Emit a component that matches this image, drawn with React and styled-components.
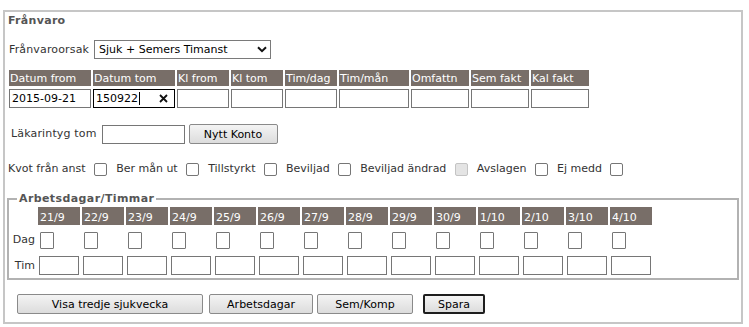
import React from 'react';
import styled, { createGlobalStyle } from 'styled-components';

const Global = createGlobalStyle`
  html, body { margin: 0; padding: 0; background: #fff; }
  body {
    font-family: "DejaVu Sans", Verdana, sans-serif;
    font-size: 11px;
    color: #333;
  }
  * { box-sizing: border-box; }
`;

const Panel = styled.div`
  margin: 10px 0 0 3px;
  width: 740px;
  border: 2px solid #c6c6c6;
  padding: 2px 2px 8px 2px;
  display: flex;
  flex-direction: column;
`;

const Title = styled.div`
  font-weight: bold;
  line-height: 14px;
  height: 14px;
  color: #555;
  padding-left: 1px;
  letter-spacing: 0.3px;
`;

const Row = styled.div`
  display: flex;
  align-items: center;
  margin-top: ${(p) => p.$mt || 0}px;
  padding-left: ${(p) => p.$pl || 0}px;
  gap: ${(p) => p.$gap || 0}px;
  height: ${(p) => p.$h}px;
`;

const Label = styled.span`
  line-height: 14px;
  white-space: nowrap;
  color: #333;
  letter-spacing: 0.15px;
`;

const SelectWrap = styled.div`
  position: relative;
  width: 177px;
  height: 19px;
`;

const Select = styled.select`
  appearance: none;
  -webkit-appearance: none;
  width: 100%;
  height: 100%;
  border: 1px solid #7a7a7a;
  border-radius: 0;
  padding: 0 0 0 4px;
  font: inherit;
  color: #000;
  background: #fff;
  outline: none;
`;

const Chevron = styled.svg`
  position: absolute;
  right: 4px;
  top: 6px;
  pointer-events: none;
`;

const FieldGrid = styled.div`
  display: grid;
  grid-template-columns: 82px 82px 52px 52px 52px 70px 58px 58px 58px;
  grid-template-rows: 16px 19px;
  column-gap: 2px;
  row-gap: 3px;
  margin: 11px 0 0 2px;
`;

const HeadCell = styled.div`
  background: #786e68;
  color: #fff;
  padding: 2px 0 0 1px;
  line-height: 14px;
  white-space: nowrap;
  overflow: hidden;
`;

const TextInput = styled.input`
  width: ${(p) => (p.$w ? `${p.$w}px` : '100%')};
  height: 19px;
  border: 1px solid #767676;
  border-radius: 0;
  padding: 0 2px;
  margin: 0 0 0 ${(p) => p.$ml || 0}px;
  font: inherit;
  color: #000;
  background: #fff;
  outline: none;
`;

const FocusField = styled.div`
  display: flex;
  align-items: center;
  height: 19px;
  border: 1px solid #000;
  padding: 0 6px 0 2px;
  color: #000;
  background: #fff;
`;

const Caret = styled.span`
  display: inline-block;
  width: 1px;
  height: 13px;
  background: #000;
  margin-left: 1px;
`;

const ClearIcon = styled.svg`
  margin-left: auto;
`;

const Button = styled.button`
  width: ${(p) => p.$w}px;
  height: 20px;
  margin: 0 0 0 ${(p) => p.$ml || 0}px;
  padding: 0;
  border: ${(p) => (p.$primary ? '2px solid #1e1e1e' : '1px solid #8a8a8a')};
  border-radius: 2px;
  background: linear-gradient(#f4f4f4, #dcdcdc);
  font: inherit;
  color: #000;
  white-space: nowrap;
`;

const CheckRow = styled.div`
  display: flex;
  align-items: center;
  height: 14px;
  margin-top: 18px;
  padding-left: 1px;
  gap: 9px;
`;

const CheckItem = styled.label`
  display: inline-flex;
  align-items: center;
  gap: 8.5px;
  line-height: 14px;
  white-space: nowrap;
  color: #333;
`;

const Check = styled.input`
  appearance: none;
  -webkit-appearance: none;
  width: 13px;
  height: 13px;
  margin: 0;
  border: 1px solid ${(p) => (p.disabled ? '#c4c4c4' : '#767676')};
  border-radius: 2px;
  background: ${(p) => (p.disabled ? '#e4e4e4' : '#fff')};
`;

const Fieldset = styled.fieldset`
  margin: 16px 0 0 0;
  border: 2px solid #b2b2b2;
  padding: 2px 3px 3px 1px;
  min-width: 0;
`;

const Legend = styled.legend`
  margin-left: 7px;
  padding: 0 2px;
  font-weight: bold;
  line-height: 13px;
  color: #555;
  letter-spacing: 0.4px;
`;

const DayGrid = styled.div`
  display: grid;
  grid-template-columns: 26px repeat(14, 42px);
  grid-template-rows: 18px 25px 25px;
  column-gap: 2px;
  align-items: end;
`;

const DayHead = styled.div`
  height: 18px;
  background: #786e68;
  color: #fff;
  padding: 4px 0 0 2px;
  line-height: 14px;
  white-space: nowrap;
`;

const RowLabel = styled.div`
  text-align: right;
  padding-right: 1px;
  line-height: ${(p) => p.$lh}px;
  margin-bottom: ${(p) => p.$mb || 0}px;
  color: #333;
`;

const DayCheck = styled.input`
  appearance: none;
  -webkit-appearance: none;
  width: 14px;
  height: 17px;
  margin: 0 0 1px 2px;
  border: 1px solid #767676;
  border-radius: 1px;
  background: #fff;
`;

const DayInput = styled.input`
  width: 40px;
  height: 19px;
  margin: 0 0 0 1px;
  border: 1px solid #767676;
  border-radius: 0;
  padding: 0 2px;
  font: inherit;
  background: #fff;
  outline: none;
`;

const ButtonRow = styled.div`
  display: flex;
  margin-top: 14px;
  padding-left: 10px;
`;

const headers = [
  'Datum from', 'Datum tom', 'Kl from', 'Kl tom', 'Tim/dag',
  'Tim/mån', 'Omfattn', 'Sem fakt', 'Kal fakt',
];

const checks = [
  { label: 'Kvot från anst' },
  { label: 'Ber mån ut' },
  { label: 'Tillstyrkt' },
  { label: 'Beviljad' },
  { label: 'Beviljad ändrad', disabled: true },
  { label: 'Avslagen' },
  { label: 'Ej medd' },
];

const days = [
  '21/9', '22/9', '23/9', '24/9', '25/9', '26/9', '27/9',
  '28/9', '29/9', '30/9', '1/10', '2/10', '3/10', '4/10',
];

export default function App() {
  return (
    <>
      <Global />
      <Panel>
        <Title>Frånvaro</Title>

        <Row $mt={12} $pl={2} $gap={5} $h={19}>
          <Label>Frånvaroorsak</Label>
          <SelectWrap>
            <Select defaultValue="sjuk">
              <option value="sjuk">Sjuk + Semers Timanst</option>
            </Select>
            <Chevron width="10" height="7" viewBox="0 0 10 7">
              <path d="M1 1.2 L5 5.2 L9 1.2" fill="none" stroke="#111" strokeWidth="2" />
            </Chevron>
          </SelectWrap>
        </Row>

        <FieldGrid>
          {headers.map((h) => (
            <HeadCell key={h}>{h}</HeadCell>
          ))}
          <TextInput defaultValue="2015-09-21" />
          <FocusField>
            <span>150922</span>
            <Caret />
            <ClearIcon width="9" height="9" viewBox="0 0 9 9">
              <path d="M1 1 L8 8 M8 1 L1 8" stroke="#111" strokeWidth="1.8" />
            </ClearIcon>
          </FocusField>
          {headers.slice(2).map((h) => (
            <TextInput key={h} />
          ))}
        </FieldGrid>

        <Row $mt={16} $pl={4} $h={20}>
          <Label>Läkarintyg tom</Label>
          <TextInput $w={83} $ml={5} />
          <Button $w={89} $ml={4}>Nytt Konto</Button>
        </Row>

        <CheckRow>
          {checks.map((c) => (
            <CheckItem key={c.label}>
              {c.label}
              <Check type="checkbox" disabled={c.disabled} />
            </CheckItem>
          ))}
        </CheckRow>

        <Fieldset>
          <Legend>Arbetsdagar/Timmar</Legend>
          <DayGrid>
            <div />
            {days.map((d) => (
              <DayHead key={d}>{d}</DayHead>
            ))}
            <RowLabel $lh={18} $mb={1}>Dag</RowLabel>
            {days.map((d) => (
              <DayCheck key={d} type="checkbox" />
            ))}
            <RowLabel $lh={19}>Tim</RowLabel>
            {days.map((d) => (
              <DayInput key={d} />
            ))}
          </DayGrid>
        </Fieldset>

        <ButtonRow>
          <Button $w={186}>Visa tredje sjukvecka</Button>
          <Button $w={104} $ml={6}>Arbetsdagar</Button>
          <Button $w={96} $ml={4}>Sem/Komp</Button>
          <Button $w={62} $ml={10} $primary>Spara</Button>
        </ButtonRow>
      </Panel>
    </>
  );
}
